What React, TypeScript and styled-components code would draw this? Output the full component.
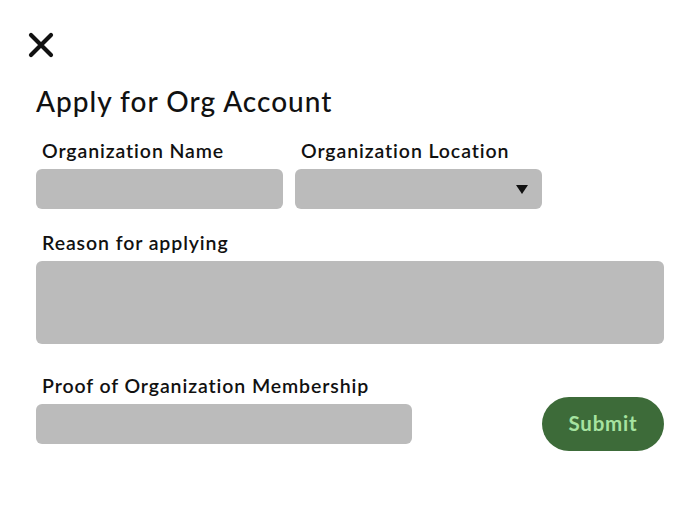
import React from "react";
import styled, { createGlobalStyle } from "styled-components";

const Global = createGlobalStyle`
  html, body { margin: 0; padding: 0; background: #ffffff; }
  body { font-family: Lato, "Open Sans", sans-serif; color: #111; }
`;

const Page = styled.div`
  width: 699px;
  height: 508px;
  box-sizing: border-box;
  padding: 30px 35px 0 36px;
  display: flex;
  flex-direction: column;
`;

const CloseButton = styled.button`
  width: 30px;
  height: 30px;
  margin-left: -10px;
  padding: 0;
  border: none;
  background: transparent;
  display: flex;
  align-items: center;
  justify-content: center;
  cursor: pointer;
`;

const Title = styled.h1`
  margin: 24px 0 0 0;
  font-size: 28px;
  line-height: 34px;
  font-weight: 500;
  letter-spacing: 1px;
  color: #111;
`;

const Row = styled.div<{ $align?: string }>`
  display: flex;
  gap: 12px;
  align-items: ${(p) => p.$align || "flex-start"};
`;

const Field = styled.div<{ $width: number }>`
  width: ${(p) => p.$width}px;
  display: flex;
  flex-direction: column;
`;

const Label = styled.label`
  padding-left: 6px;
  font-size: 19.5px;
  line-height: 24px;
  font-weight: 600;
  letter-spacing: 0.9px;
  color: #111;
  margin-bottom: 6px;
  white-space: nowrap;
`;

const Box = styled.div<{ $height: number }>`
  height: ${(p) => p.$height}px;
  background: #bbbbbb;
  border-radius: 6px;
  display: flex;
  align-items: center;
  justify-content: flex-end;
  padding-right: 14px;
`;

const Arrow = styled.span`
  width: 0;
  height: 0;
  border-left: 6px solid transparent;
  border-right: 6px solid transparent;
  border-top: 9px solid #111;
`;

const Section = styled.div<{ $top: number }>`
  margin-top: ${(p) => p.$top}px;
`;

const SubmitButton = styled.button`
  margin-left: auto;
  margin-bottom: -7px;
  width: 122px;
  height: 54px;
  padding: 0 0 3px 0;
  border: none;
  border-radius: 27px;
  background: #3d6b39;
  color: #a6e3a0;
  font-family: Lato, sans-serif;
  font-size: 20.5px;
  font-weight: 700;
  letter-spacing: 0.8px;
  cursor: pointer;
`;

export default function App() {
  return (
    <>
      <Global />
      <Page>
        <CloseButton aria-label="Close">
          <svg width="26" height="26" viewBox="0 0 26 26">
            <path d="M3 3 L23 23 M23 3 L3 23" stroke="#111" strokeWidth="4.2" strokeLinecap="round" />
          </svg>
        </CloseButton>
        <Title>Apply for Org Account</Title>
        <Section $top={21}>
          <Row>
            <Field $width={247}>
              <Label>Organization Name</Label>
              <Box $height={40} />
            </Field>
            <Field $width={247}>
              <Label>Organization Location</Label>
              <Box $height={40}>
                <Arrow />
              </Box>
            </Field>
          </Row>
        </Section>
        <Section $top={22}>
          <Field $width={628}>
            <Label>Reason for applying</Label>
            <Box $height={83} />
          </Field>
        </Section>
        <Section $top={30}>
          <Row $align="flex-end">
            <Field $width={376}>
              <Label>Proof of Organization Membership</Label>
              <Box $height={40} />
            </Field>
            <SubmitButton>Submit</SubmitButton>
          </Row>
        </Section>
      </Page>
    </>
  );
}
